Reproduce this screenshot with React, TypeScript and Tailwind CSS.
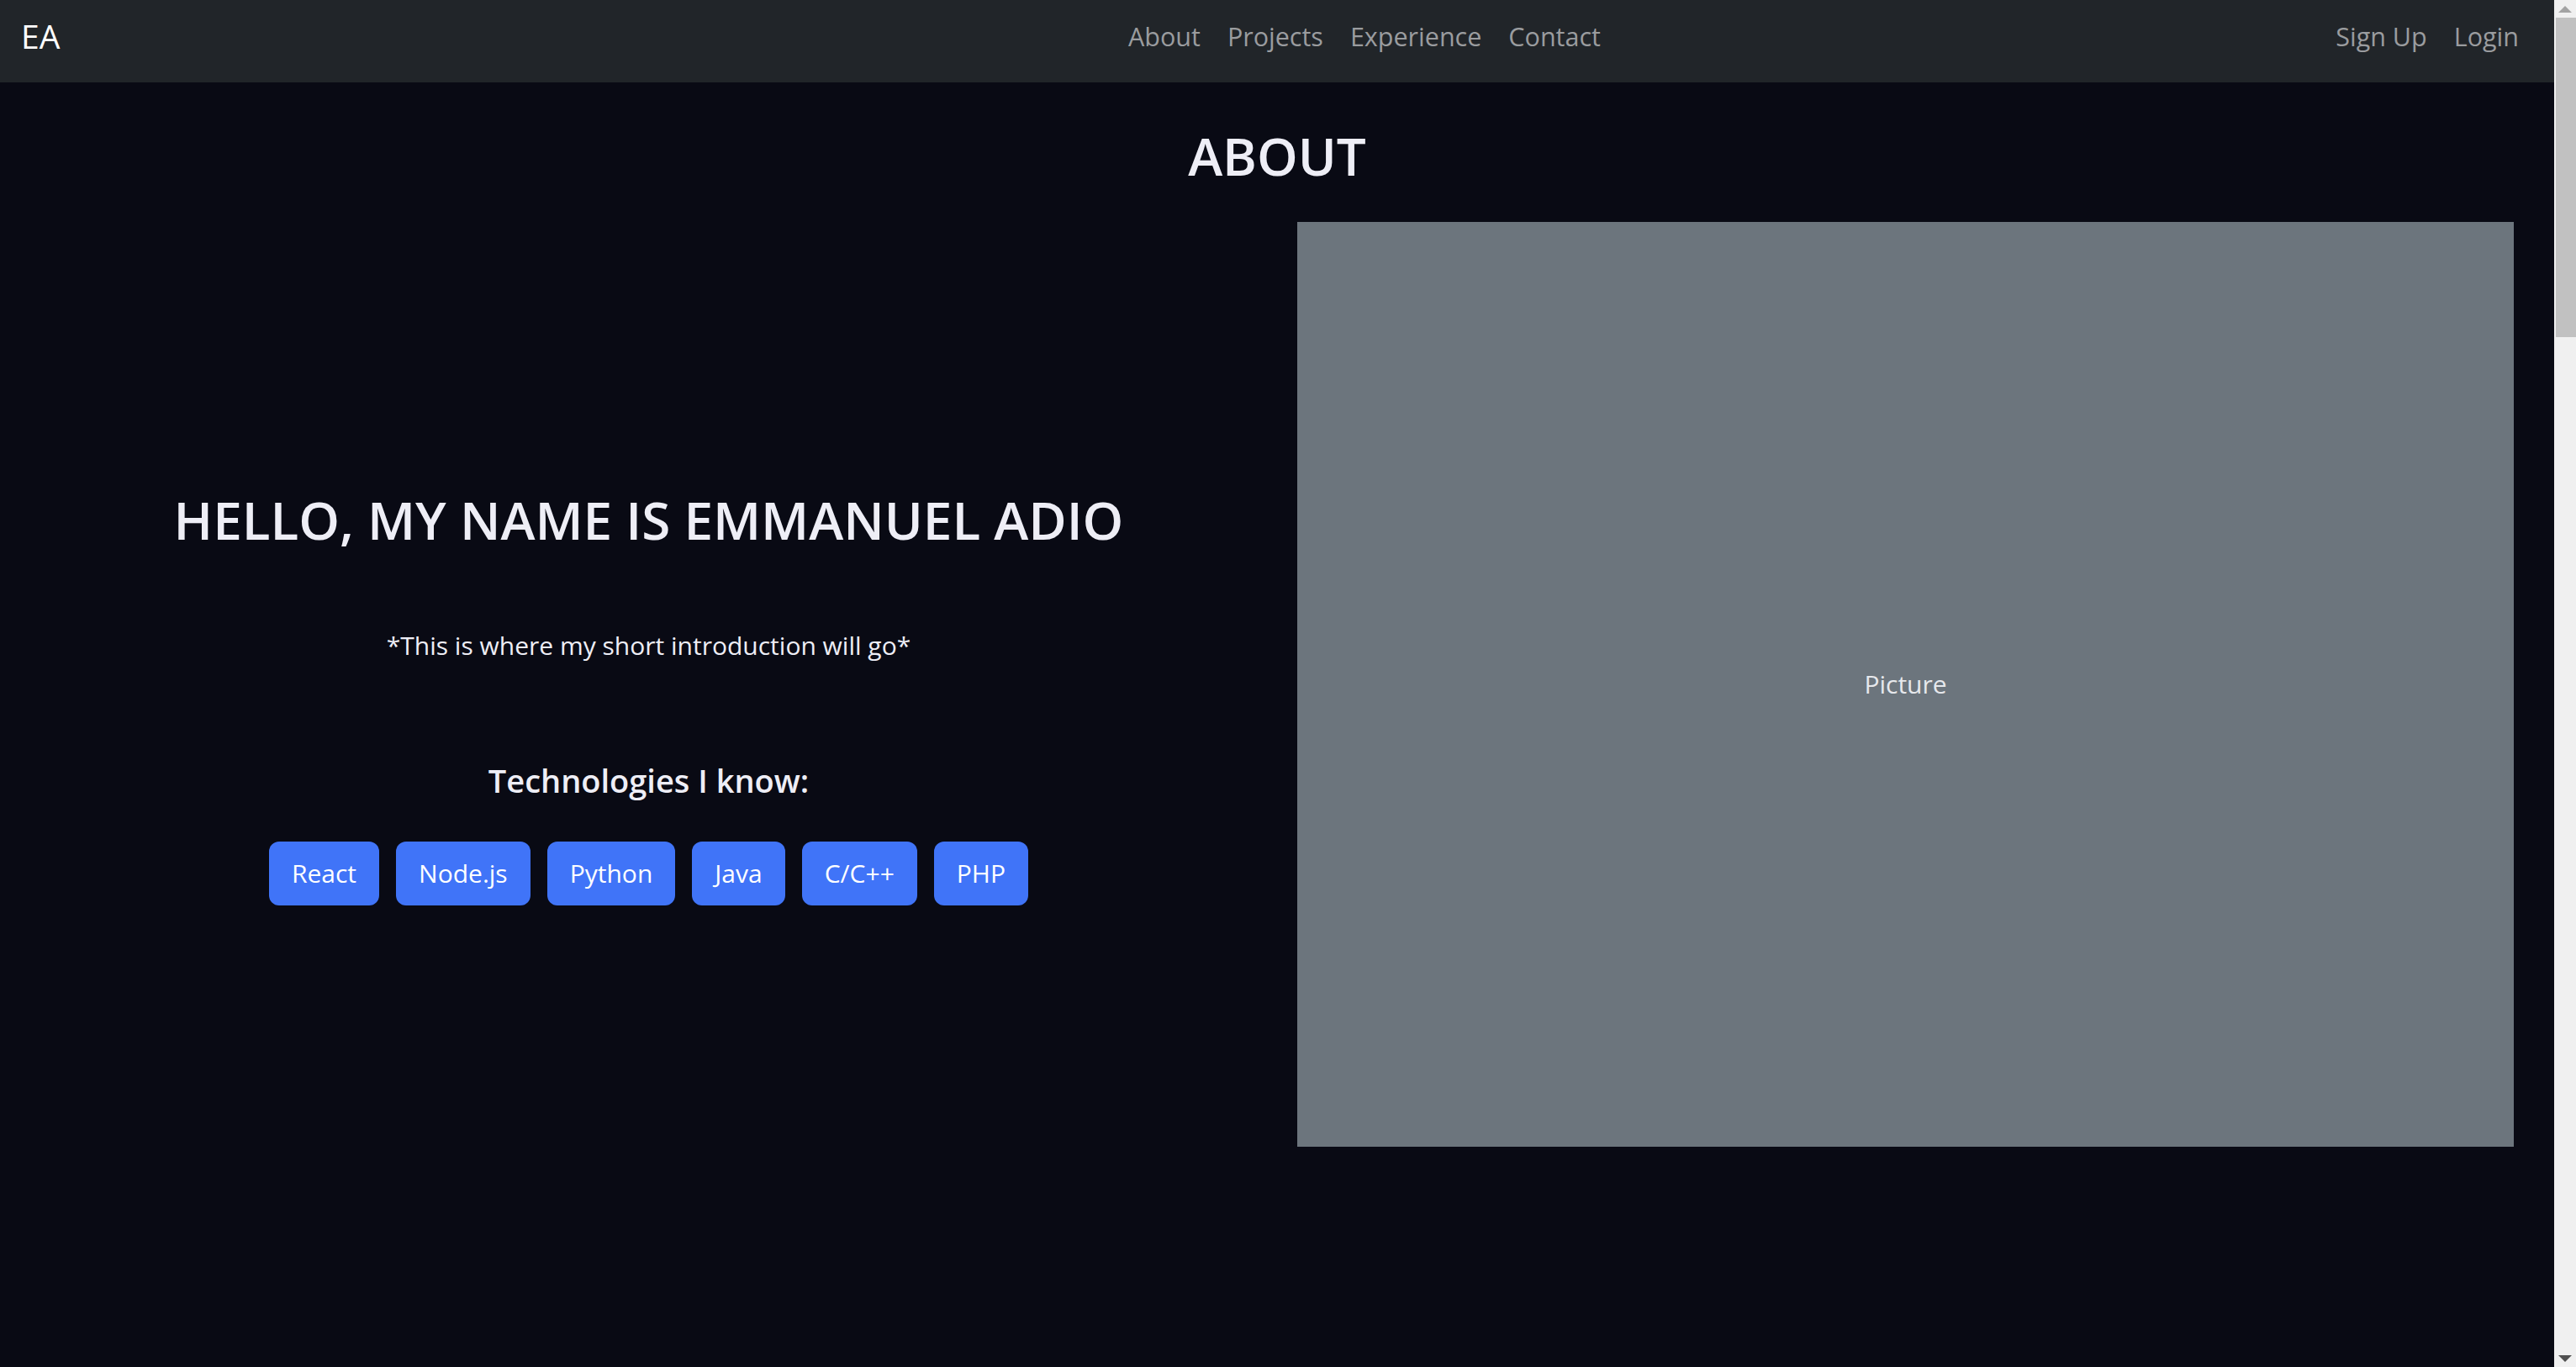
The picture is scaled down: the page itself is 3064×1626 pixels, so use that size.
import React from "react";

const techs = ["React", "Node.js", "Python", "Java", "C/C++", "PHP"];

function NavLink({ label }: { label: string }) {
    return (
        <a href="#" className="px-4 text-[30.5px] leading-none text-[#9a9c9f] hover:text-white">
            {label}
        </a>
    );
}

function Scrollbar() {
    return (
        <div className="w-[26px] h-full bg-[#f0f0f0] flex flex-col">
            <div className="h-[21px] flex items-center justify-center">
                <div className="w-0 h-0 border-l-[8px] border-r-[8px] border-b-[8px] border-l-transparent border-r-transparent border-b-[#a3a3a3]" />
            </div>
            <div className="h-[380px] ml-[2px] bg-[#c1c1c1]" />
            <div className="flex-1" />
            <div className="h-[21px] flex items-center justify-center">
                <div className="w-0 h-0 border-l-[8px] border-r-[8px] border-t-[8px] border-l-transparent border-r-transparent border-t-[#505050]" />
            </div>
        </div>
    );
}

export default function App() {
    return (
        <div className="h-[1626px] w-full flex overflow-hidden bg-[#090a14] font-['Open_Sans',sans-serif]">
            <div className="w-[3038px] h-full flex flex-col">
                {/* navbar */}
                <nav className="h-[98px] bg-[#212529] flex items-center pl-[25px] pr-[26px] pb-[11px]">
                    <div className="w-[1301px]">
                        <a href="#" className="text-[39px] leading-none text-white">EA</a>
                    </div>
                    <div className="flex items-center">
                        <NavLink label="About" />
                        <NavLink label="Projects" />
                        <NavLink label="Experience" />
                        <NavLink label="Contact" />
                    </div>
                    <div className="ml-auto flex items-center">
                        <NavLink label="Sign Up" />
                        <NavLink label="Login" />
                    </div>
                </nav>

                {/* about section */}
                <section className="flex flex-col">
                    <h2 className="mt-[56px] text-center text-[62px] leading-none font-semibold text-[#eeeef6]">
                        ABOUT
                    </h2>

                    <div className="mt-[48px] flex">
                        <div className="w-[1543px] flex flex-col items-center pt-[323px] text-[#eeeef6]">
                            <h1 className="text-[62px] leading-none font-semibold">
                                HELLO, MY NAME IS EMMANUEL ADIO
                            </h1>
                            <p className="mt-[104px] text-[30px] leading-none">
                                *This is where my short introduction will go*
                            </p>
                            <h4 className="mt-[126px] text-[38px] leading-none font-semibold">
                                Technologies I know:
                            </h4>
                            <div className="mt-[54px] flex gap-[20px]">
                                {techs.map((t) => (
                                    <span
                                        key={t}
                                        className="h-[76px] px-[27px] flex items-center rounded-[12px] bg-[#4074f8] text-white text-[30px] leading-none"
                                    >
                                        {t}
                                    </span>
                                ))}
                            </div>
                        </div>

                        <div className="w-[1447px] h-[1100px] bg-[#6c757d] flex items-center justify-center">
                            <span className="text-[30px] leading-none text-[#e6e8ec]">Picture</span>
                        </div>
                    </div>
                </section>
            </div>
            <Scrollbar />
        </div>
    );
}
